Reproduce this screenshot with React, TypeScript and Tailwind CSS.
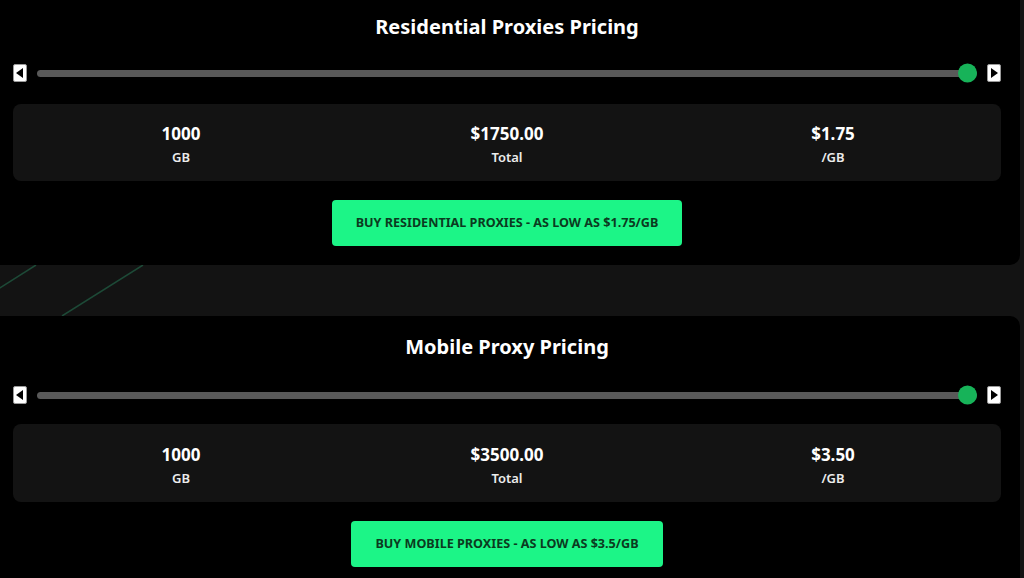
import React from "react";

type CardProps = {
  title: string;
  gb: string;
  total: string;
  per: string;
  button: string;
  className: string;
  padTop: string;
  sliderGap: string;
  statsGap: string;
  statsH: string;
};

function Arrow({ dir }: { dir: "left" | "right" }) {
  return (
    <div className="flex h-[18px] w-[14px] items-center justify-center rounded-[2px] border border-[#9a9a9a] bg-white">
      <svg width="8" height="10" viewBox="0 0 8 10">
        {dir === "left" ? (
          <polygon points="7,0 7,10 0,5" fill="#000" />
        ) : (
          <polygon points="1,0 1,10 8,5" fill="#000" />
        )}
      </svg>
    </div>
  );
}

function Stat({ value, label }: { value: string; label: string }) {
  return (
    <div className="flex flex-col items-center justify-center gap-[3px] pt-[4px]">
      <div className="text-[17px] font-bold leading-[22px] text-white">{value}</div>
      <div className="text-[13px] font-semibold leading-[18px] text-[#ececec]">{label}</div>
    </div>
  );
}

function Card({ title, gb, total, per, button, className, padTop, sliderGap, statsGap, statsH }: CardProps) {
  return (
    <div className={`w-[1020px] shrink-0 bg-black pb-[19px] pl-[13px] pr-[19px] ${padTop} ${className}`}>
      <h2 className="text-center text-[20px] font-bold leading-[28px] text-white">{title}</h2>
      <div className={`flex h-[18px] items-center gap-[10px] ${sliderGap}`}>
        <Arrow dir="left" />
        <div className="relative h-[7px] flex-1 rounded-full bg-[#595959]">
          <div className="absolute right-0 top-1/2 h-[19px] w-[19px] -translate-y-1/2 rounded-full bg-[#17b359]" />
        </div>
        <Arrow dir="right" />
      </div>
      <div className={`grid grid-cols-3 rounded-[8px] bg-[#131313] px-[5px] ${statsGap} ${statsH}`}>
        <Stat value={gb} label="GB" />
        <Stat value={total} label="Total" />
        <Stat value={per} label="/GB" />
      </div>
      <div className="mt-[19px] flex justify-center">
        <button className="h-[46px] whitespace-nowrap rounded-[4px] bg-[#1cf587] px-[24px] text-[12.6px] font-bold uppercase text-[#0b3a20]">
          {button}
        </button>
      </div>
    </div>
  );
}

export default function App() {
  return (
    <div
      className="relative flex h-[578px] w-[1024px] flex-col gap-[51px] overflow-hidden bg-[#131313]"
      style={{ fontFamily: '"Noto Sans", "Open Sans", sans-serif' }}
    >
      <svg className="absolute left-0 top-[265px]" width="200" height="51" viewBox="0 0 200 51">
        <line x1="-5" y1="26" x2="36" y2="0" stroke="#1d4a37" strokeWidth="1.5" />
        <line x1="62" y1="51" x2="143" y2="0" stroke="#1d4a37" strokeWidth="1.5" />
      </svg>
      <Card
        title="Residential Proxies Pricing"
        gb="1000"
        total="$1750.00"
        per="$1.75"
        button="Buy Residential Proxies - As low as $1.75/GB"
        className="relative rounded-br-[10px]"
        padTop="pt-[13px]"
        sliderGap="mt-[23px]"
        statsGap="mt-[22px]"
        statsH="h-[77px]"
      />
      <Card
        title="Mobile Proxy Pricing"
        gb="1000"
        total="$3500.00"
        per="$3.50"
        button="Buy Mobile Proxies - As low as $3.5/GB"
        className="relative rounded-tr-[10px]"
        padTop="pt-[17px]"
        sliderGap="mt-[25px]"
        statsGap="mt-[20px]"
        statsH="h-[78px]"
      />
    </div>
  );
}
